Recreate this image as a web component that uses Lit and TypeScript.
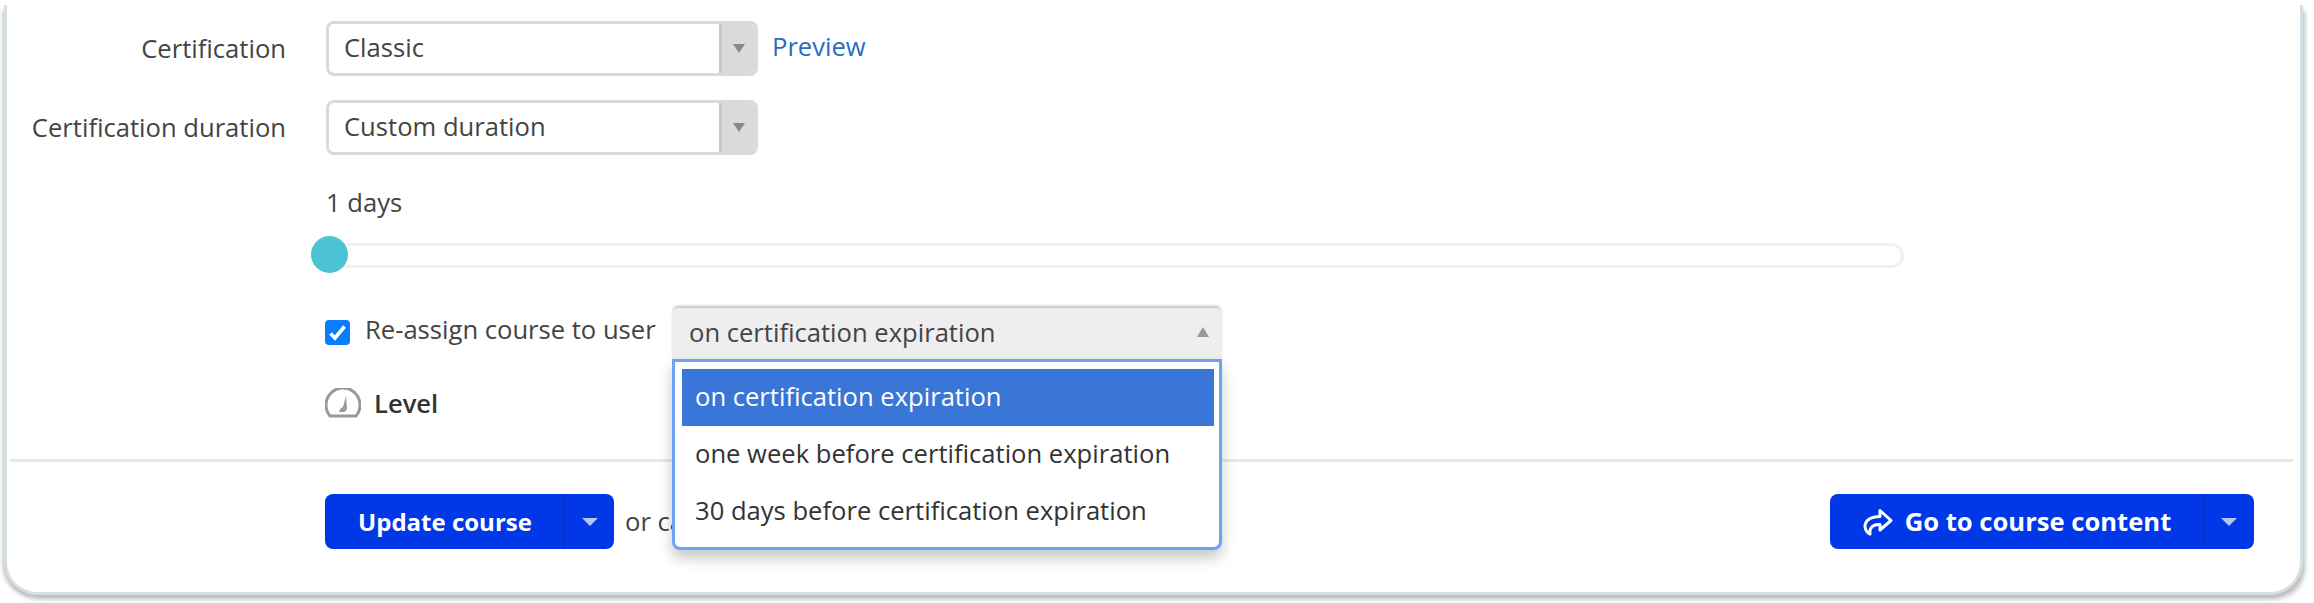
import { LitElement, html, css } from "lit";
import { customElement } from "lit/decorators.js";

@customElement("app-root")
export class AppRoot extends LitElement {
  static styles = css`
    :host { display: block; width: 2314px; height: 603px; background: #fff; overflow: hidden;
      font-family: "Open Sans", sans-serif; font-size: 25.6px; color: #444; }
    * { box-sizing: border-box; }
    .card { margin: 5px 11px 0 4px; height: 590px; background: #fff; border: 3px solid #d3dfe4; border-top: 0;
      border-radius: 0 0 33px 33px; box-shadow: 3px 5px 5px -1px #bbb, -3px 3px 4px -2px #bbb; padding-top: 16px; }
    .row { display: flex; align-items: center; height: 55px; margin-bottom: 24px; }
    .label { width: 279px; text-align: right; margin-right: 40px; white-space: nowrap; }
    .select { width: 432px; height: 55px; display: flex; border: 3px solid #d3dce1; border-radius: 8px; background: #fff; overflow: hidden; }
    .value { flex: 1; padding-left: 15px; line-height: 47px; }
    .arrowbox { width: 36px; background: #dadada; border-left: 3px solid #c8c8c8; display: flex; align-items: center; justify-content: center; }
    .tri { width: 0; height: 0; border-left: 6.5px solid transparent; border-right: 6.5px solid transparent; border-top: 9px solid #888; }
    .preview { color: #2a6cc4; margin-left: 14px; position: relative; top: -2px; }
    .indent { margin-left: 319px; }
    .days { height: 36px; line-height: 36px; margin-top: 30px; }
    .track { position: relative; width: 1579px; height: 25px; margin: 22px 0 0 318px; border: 3px solid #f0f0f0; border-radius: 13px; }
    .thumb { position: absolute; left: -17px; top: -10px; width: 37px; height: 37px; border-radius: 50%; background: #4cc3d2; }
    .reassign { display: flex; align-items: flex-start; height: 51px; margin: 40px 0 0 318px; }
    .check { width: 25px; height: 25px; margin-top: 12px; background: #0a7cff; border-radius: 4px; display: flex; align-items: center; justify-content: center; }
    .check-label { margin: 4px 0 0 15px; line-height: 36px; width: 307px; white-space: nowrap; }
    .open { position: relative; width: 550px; height: 51px; background: #eee; border-radius: 6px 6px 0 0; box-shadow: 0 -3px 3px -1px rgba(90,100,110,.4); z-index: 2; }
    .open .value { padding-left: 17px; line-height: 50px; }
    .up { position: absolute; right: 13px; top: 19px; width: 0; height: 0; border-left: 6px solid transparent; border-right: 6px solid transparent; border-bottom: 10px solid #999; }
    .drop { position: absolute; left: 0; right: 0; top: 51px; height: 191px; background: #fff; border: 3px solid #6fa3f2; border-radius: 0 0 8px 8px;
      padding: 7px 5px 0 7px; box-shadow: 0 8px 14px rgba(0,0,0,.22); color: #333; }
    .opt { height: 57px; line-height: 55px; padding-left: 13px; white-space: nowrap; }
    .opt.on { background: #3a75d8; color: #fff; }
    .level { display: flex; align-items: center; height: 36px; margin: 26px 0 0 318px; font-weight: 600; color: #333; }
    .level svg { margin-right: 13px; display: block; }
    hr { border: 0; height: 3px; background: #e8e8e8; margin: 38px 7px 0 3px; }
    .footer { display: flex; align-items: center; justify-content: space-between; margin: 32px 46px 0 318px; }
    .left { display: flex; align-items: center; }
    .btn { display: flex; height: 55px; background: #0037e6; border-radius: 8px; color: #fff; font-weight: 700; align-items: stretch; }
    .btn .main { display: flex; align-items: center; justify-content: center; gap: 12px; border-right: 2px solid #0b32c4; }
    .btn .cap { display: flex; align-items: center; justify-content: center; flex: 1; }
    .captri { width: 0; height: 0; border-left: 8px solid transparent; border-right: 8px solid transparent; border-top: 8px solid #b7c4f3; }
    .u { width: 289px; font-size: 24px; } .u .main { width: 240px; padding-left: 2px; } .or { margin-left: 11px; white-space: nowrap; }
    .g { width: 424px; } .g .main { width: 374px; }
  `;

  render() {
    return html`
      <div class="card">
        <div class="row">
          <div class="label">Certification</div>
          <div class="select"><div class="value">Classic</div><div class="arrowbox"><div class="tri"></div></div></div>
          <a class="preview">Preview</a>
        </div>
        <div class="row">
          <div class="label">Certification duration</div>
          <div class="select"><div class="value">Custom duration</div><div class="arrowbox"><div class="tri"></div></div></div>
        </div>
        <div class="days indent">1 days</div>
        <div class="track"><div class="thumb"></div></div>
        <div class="reassign">
          <div class="check">
            <svg width="19" height="17" viewBox="0 0 19 17"><path d="M2.5 9.5 L7 14 L16.5 2.5" fill="none" stroke="#fff" stroke-width="3.6"/></svg>
          </div>
          <div class="check-label">Re-assign course to user</div>
          <div class="open">
            <div class="value">on certification expiration</div>
            <div class="up"></div>
            <div class="drop">
              <div class="opt on">on certification expiration</div>
              <div class="opt">one week before certification expiration</div>
              <div class="opt">30 days before certification expiration</div>
            </div>
          </div>
        </div>
        <div class="level">
          <svg width="36" height="30" viewBox="0 0 36 30"><path d="M5 28 A17 17 0 1 1 31 28 Z" fill="none" stroke="#999" stroke-width="3"/><path d="M14 24 Q15 20 18 19 L21 8 L22 21 Q21 24 18 24 Z" fill="#999"/></svg>
          Level
        </div>
        <hr />
        <div class="footer">
          <div class="left">
            <div class="btn u"><div class="main">Update course</div><div class="cap"><div class="captri"></div></div></div>
            <span class="or">or cancel</span>
          </div>
          <div class="btn g">
            <div class="main">
              <svg width="32" height="28" viewBox="0 0 32 28"><path d="M19 2.5 L30 12.5 L19 22 V16.5 C13 16 8 19 9 26 C2 23 0 9 19 8.5 Z" fill="none" stroke="#fff" stroke-width="3" stroke-linejoin="round"/></svg>
              Go to course content
            </div>
            <div class="cap"><div class="captri"></div></div>
          </div>
        </div>
      </div>
    `;
  }
}
